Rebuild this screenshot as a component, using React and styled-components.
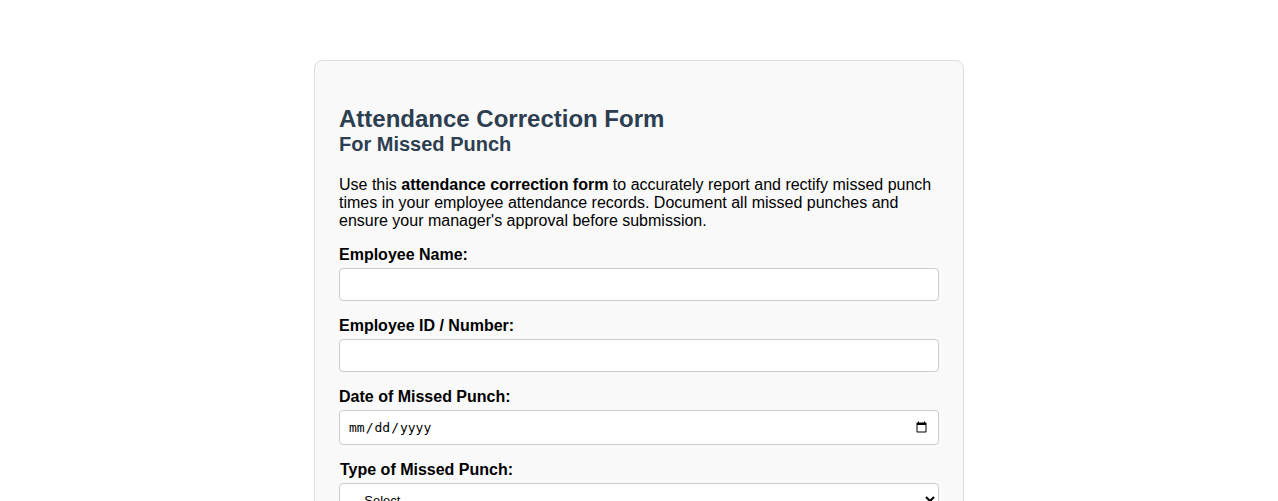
import React from 'react'
import styled, { createGlobalStyle } from 'styled-components'

const GlobalStyle = createGlobalStyle`
	body {
		margin: 0;
		background: #ffffff;
		font-family: "Liberation Sans", Arial, sans-serif;
		color: #000;
	}
`

const Page = styled.div`
	padding-top: 60px;
	display: flex;
	justify-content: center;
`

const Card = styled.div`
	width: 600px;
	padding: 24px;
	background-color: #f9f9f9;
	border: 1px solid #dddddd;
	border-radius: 8px;
`

const Title = styled.h1`
	margin: 20px 0 0;
	font-size: 24px;
	color: #2c3e50;
`

const Subtitle = styled.h2`
	margin: 0 0 20px;
	font-size: 20px;
	color: #2c3e50;
`

const Intro = styled.p`
	margin: 0 0 16px;
	font-size: 16px;
`

const Field = styled.div`
	display: flex;
	flex-direction: column;
	margin-bottom: 16px;
`

const Label = styled.label`
	font-weight: bold;
	font-size: 16px;
	margin-bottom: 4px;
	padding-left: ${props => (props.$nudge ? '1px' : '0')};
`

const Input = styled.input`
	box-sizing: border-box;
	width: 100%;
	height: ${props => (props.type === 'date' ? '35px' : '33px')};
	padding: 8px;
	font-size: 13px;
	background: #fff;
	border: 1px solid #cccccc;
	border-radius: 4px;
`

const Select = styled.select`
	box-sizing: border-box;
	width: 100%;
	height: 33px;
	padding: 8px;
	font-family: "Liberation Sans", Arial, sans-serif;
	font-size: 13px;
	background: #fff;
	border: 1px solid #cccccc;
	border-radius: 4px;
`

export default function App() {
	return (
		<>
			<GlobalStyle />
			<Page>
				<Card>
					<Title>Attendance Correction Form</Title>
					<Subtitle>For Missed Punch</Subtitle>
					<Intro>
						Use this <strong>attendance correction form</strong> to accurately report and rectify missed punch
						times in your employee attendance records. Document all missed punches and ensure your
						manager's approval before submission.
					</Intro>
					<Field>
						<Label htmlFor="name">Employee Name:</Label>
						<Input id="name" type="text" />
					</Field>
					<Field>
						<Label htmlFor="empid">Employee ID / Number:</Label>
						<Input id="empid" type="text" />
					</Field>
					<Field>
						<Label htmlFor="date">Date of Missed Punch:</Label>
						<Input id="date" type="date" />
					</Field>
					<Field>
						<Label htmlFor="type" $nudge>Type of Missed Punch:</Label>
						<Select id="type" defaultValue="">
							<option value="">-- Select --</option>
							<option value="in">Clock In</option>
							<option value="out">Clock Out</option>
							<option value="break-start">Break Start</option>
							<option value="break-end">Break End</option>
						</Select>
					</Field>
				</Card>
			</Page>
		</>
	)
}
